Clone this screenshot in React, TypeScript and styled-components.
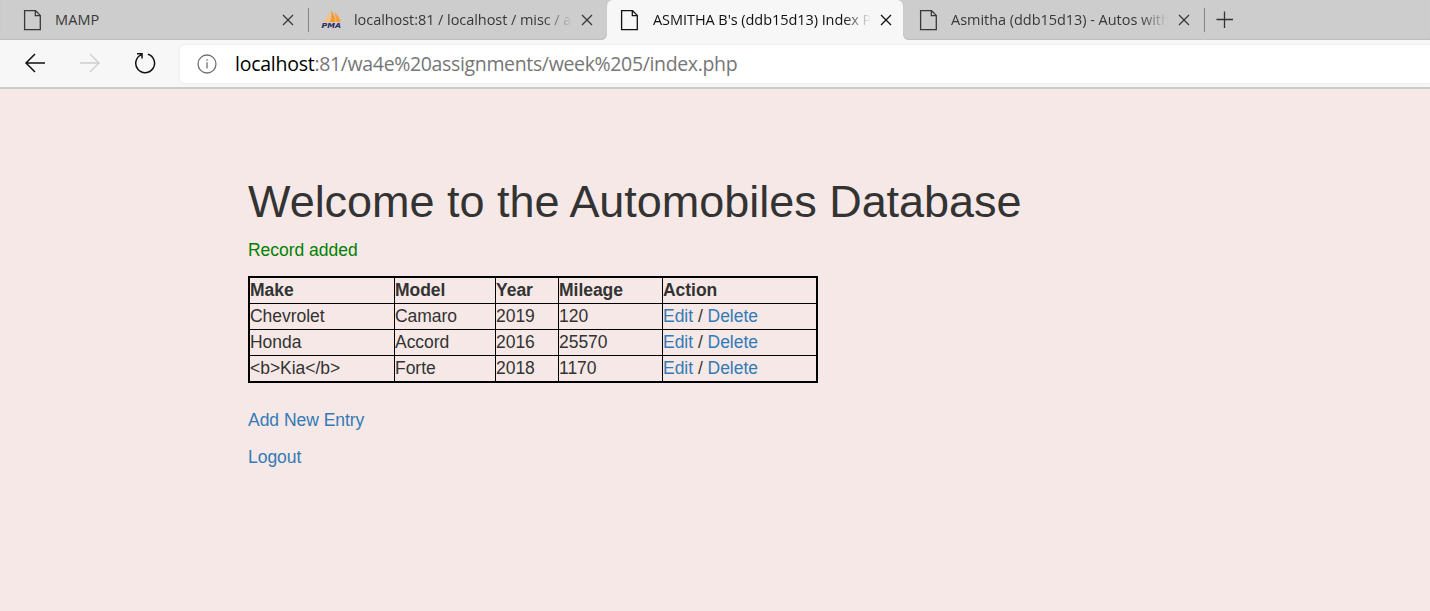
import React from "react";
import styled, { createGlobalStyle } from "styled-components";

const Global = createGlobalStyle`
  *, *::before, *::after { box-sizing: border-box; }
  html, body { margin: 0; padding: 0; background: #f5e8e6; }
  body { overflow: hidden; }
`;

const Window = styled.div`
  width: 100%;
  height: 611px;
  display: flex;
  flex-direction: column;
  overflow: hidden;
  background: #f5e8e6;
`;

const TabStrip = styled.div`
  height: 40px;
  flex: none;
  display: flex;
  background: #f7f7f7;
`;

const Tab = styled.div<{ $width: number; $left: number; $right: number; $active?: boolean; $corner?: string }>`
  width: ${(p) => p.$width}px;
  height: 40px;
  flex: none;
  display: flex;
  align-items: center;
  padding: 0 ${(p) => p.$right}px 0 ${(p) => p.$left}px;
  color: ${(p) => (p.$active ? "#101010" : "#383838")};
  background: ${(p) => (p.$active ? "#f7f7f7" : "#cdcdcd")};
  box-shadow: ${(p) => (p.$active ? "none" : "inset 0 -1px 1px #bdbdbd")};
  border-radius: ${(p) => p.$corner || "0"};
`;

const ActiveBacking = styled.div`
  flex: none;
  background: linear-gradient(#cdcdcd 50%, #f7f7f7 50%);
`;

const TabTitle = styled.span<{ $gap: number; $width: number; $spacing: number; $fade?: boolean }>`
  width: ${(p) => p.$width}px;
  margin-left: ${(p) => p.$gap}px;
  flex: none;
  overflow: hidden;
  white-space: nowrap;
  font: 400 14.5px/20px "Open Sans", "Noto Sans", sans-serif;
  letter-spacing: ${(p) => p.$spacing}px;
  ${(p) =>
    p.$fade &&
    "mask-image: linear-gradient(to right, #000 calc(100% - 28px), transparent);"}
`;

const CloseButton = styled.span`
  display: flex;
  margin-left: auto;
`;

const Divider = styled.span`
  width: 1px;
  height: 40px;
  flex: none;
  background: linear-gradient(#cdcdcd 8px, #858585 8px, #858585 32px, #cdcdcd 32px);
`;

const StripEnd = styled.div`
  flex: 1;
  display: flex;
  align-items: center;
  padding: 0 0 1px 11px;
  background: #cdcdcd;
  box-shadow: inset 0 -1px 1px #bdbdbd;
`;

const Toolbar = styled.div`
  height: 49px;
  flex: none;
  display: flex;
  align-items: flex-start;
  padding-top: 5px;
  background: #f7f7f7;
  border-bottom: 2px solid #cbcbcb;
`;

const NavButtons = styled.div`
  width: 180px;
  height: 36px;
  flex: none;
  display: flex;
  align-items: center;
  gap: 33px;
  padding-left: 24px;
`;

const AddressBar = styled.div`
  flex: 1;
  height: 38px;
  display: flex;
  align-items: center;
  padding: 0 0 1px 16px;
  border-radius: 5px 0 0 5px;
  background: #fff;
  box-shadow: 0 0 3px #e4e4e4;
`;

const Url = styled.span`
  margin: 1px 0 0 17px;
  font: 400 19.5px/26px "Open Sans", "Noto Sans", sans-serif;
  letter-spacing: -0.35px;
  color: #767676;
  white-space: nowrap;
`;

const Host = styled.span`
  color: #000;
  letter-spacing: -0.25px;
`;

const Page = styled.main`
  flex: 1;
  padding: 88px 0 0 248px;
  font: 17.5px/25px "Liberation Sans", Arial, sans-serif;
  letter-spacing: -0.03px;
  color: #333;
`;

const Heading = styled.h1`
  margin: 0;
  font-size: 45px;
  line-height: 49px;
  font-weight: 400;
  white-space: nowrap;
`;

const Flash = styled.p`
  margin: 12px 0 13px;
  color: green;
`;

const Table = styled.table`
  width: 570px;
  table-layout: fixed;
  border: 2px solid #000;
  border-collapse: separate;
  border-spacing: 0;
`;

const Column = styled.col<{ $width?: number }>`
  width: ${(p) => (p.$width ? `${p.$width}px` : "auto")};
`;

const Row = styled.tr`
  &:last-child > td { border-bottom: 0; height: 25px; }
`;

const Cell = styled.td`
  height: 26px;
  padding: 0;
  line-height: 25px;
  text-align: left;
  white-space: nowrap;
  border-right: 1px solid #000;
  border-bottom: 1px solid #000;
  &:last-child { border-right: 0; }
`;

const HeadCell = styled(Cell)`
  font-weight: 700;
`;

const Link = styled.a`
  color: #337ab7;
  text-decoration: none;
`;

const Links = styled.div`
  display: flex;
  flex-direction: column;
  align-items: flex-start;
  gap: 12px;
  margin-top: 25px;
`;

const PageIcon = () => (
  <svg width="18" height="21" viewBox="0 0 18 21" fill="none" stroke="currentColor" strokeWidth="1.3">
    <path d="M1.600 .7h11l4.700 4.700v14.300H1.600zM12.300 .8v4.900h4.900" />
  </svg>
);

const CloseIcon = () => (
  <svg width="12" height="12" viewBox="0 0 12 12" fill="none" stroke="currentColor" strokeWidth="1.3">
    <path d="M1 1l10 10M11 1L1 11" />
  </svg>
);

const SailText = styled.text`
  font: italic 700 7px "DejaVu Sans", sans-serif;
  fill: #2b2b63;
`;

const SailIcon = () => (
  <svg width="21" height="20" viewBox="0 0 21 20">
    <path d="M8.300 1.500C7.500 6 5 9.500 1.500 12.600l7.300-1.200z" fill="#fbc07a" />
    <path d="M10 .3c3 3.500 4.500 7 4 11.900L8.900 11.800c1.600-3.700 1.900-7.500 1.100-11.500z" fill="#f99a24" />
    <path d="M13.300 2c3.200 2.500 5.700 5.800 6.500 10.300l-5.300-.5c.4-3.500 0-6.700-1.200-9.800z" fill="#faa23a" />
    <SailText x="0.500" y="18" textLength="19.500" lengthAdjust="spacingAndGlyphs">PMA</SailText>
  </svg>
);

const PlusIcon = () => (
  <svg width="18" height="18" viewBox="0 0 18 18" stroke="#333" strokeWidth="1.3">
    <path d="M.5 8.500h16.500M8.500 .5v16.400" />
  </svg>
);

const BackIcon = () => (
  <svg width="22" height="20" viewBox="0 0 22 20" fill="none" stroke="#111" strokeWidth="1.5">
    <path d="M21 10H2M11 1L2 10l9 9" />
  </svg>
);

const ForwardIcon = () => (
  <svg width="22" height="20" viewBox="0 0 22 20" fill="none" stroke="#cecece" strokeWidth="1.4">
    <path d="M1 10h19M11 1l9 9-9 9" />
  </svg>
);

const ReloadIcon = () => (
  <svg width="22" height="22" viewBox="0 0 22 22" fill="none" stroke="#111" strokeWidth="1.5">
    <path d="M14 2.300A9.400 9.400 0 1 1 7.500 2.600M3 1.700h5v4.800" />
  </svg>
);

const InfoIcon = () => (
  <svg width="22" height="22" viewBox="0 0 22 22" fill="none" stroke="#707070" strokeWidth="1.300">
    <circle cx="11" cy="11" r="9" />
    <path d="M11 9.300v6.200M11 6.200v1.600" />
  </svg>
);

const columns = [145, 101, 63, 104, undefined];
const headings = ["Make", "Model", "Year", "Mileage", "Action"];
const cars = [
  ["Chevrolet", "Camaro", "2019", "120"],
  ["Honda", "Accord", "2016", "25570"],
  ["<b>Kia</b>", "Forte", "2018", "1170"],
];

export default function App() {
  return (
    <Window>
      <Global />
      <TabStrip>
        <Tab $width={308} $left={23} $right={14}>
          <PageIcon />
          <TabTitle $gap={14} $width={200} $spacing={0.1}>MAMP</TabTitle>
          <CloseButton><CloseIcon /></CloseButton>
        </Tab>
        <Divider />
        <Tab $width={298} $left={12} $right={14} $corner="0 0 6px 0">
          <SailIcon />
          <TabTitle $gap={12} $width={218} $spacing={-0.06} $fade>localhost:81 / localhost / misc / a</TabTitle>
          <CloseButton><CloseIcon /></CloseButton>
        </Tab>
        <ActiveBacking>
          <Tab $width={296} $left={13} $right={11} $active $corner="6px 6px 0 0">
            <PageIcon />
            <TabTitle $gap={15} $width={218} $spacing={-0.06} $fade>ASMITHA B's (ddb15d13) Index P</TabTitle>
            <CloseButton><CloseIcon /></CloseButton>
          </Tab>
        </ActiveBacking>
        <Tab $width={301} $left={16} $right={14} $corner="0 0 0 6px">
          <PageIcon />
          <TabTitle $gap={14} $width={217} $spacing={-0.04} $fade>Asmitha (ddb15d13) - Autos with</TabTitle>
          <CloseButton><CloseIcon /></CloseButton>
        </Tab>
        <Divider />
        <StripEnd><PlusIcon /></StripEnd>
      </TabStrip>
      <Toolbar>
        <NavButtons>
          <BackIcon />
          <ForwardIcon />
          <ReloadIcon />
        </NavButtons>
        <AddressBar>
          <InfoIcon />
          <Url><Host>localhost</Host>:81/wa4e%20assignments/week%205/index.php</Url>
        </AddressBar>
      </Toolbar>
      <Page>
        <Heading>Welcome to the Automobiles Database</Heading>
        <Flash>Record added</Flash>
        <Table>
          <colgroup>
            {columns.map((w, i) => (
              <Column key={i} $width={w} />
            ))}
          </colgroup>
          <tbody>
            <Row>
              {headings.map((h) => (
                <HeadCell key={h}>{h}</HeadCell>
              ))}
            </Row>
            {cars.map((car) => (
              <Row key={car[0]}>
                {car.map((v) => (
                  <Cell key={v}>{v}</Cell>
                ))}
                <Cell><Link>Edit</Link> / <Link>Delete</Link></Cell>
              </Row>
            ))}
          </tbody>
        </Table>
        <Links>
          <Link>Add New Entry</Link>
          <Link>Logout</Link>
        </Links>
      </Page>
    </Window>
  );
}
